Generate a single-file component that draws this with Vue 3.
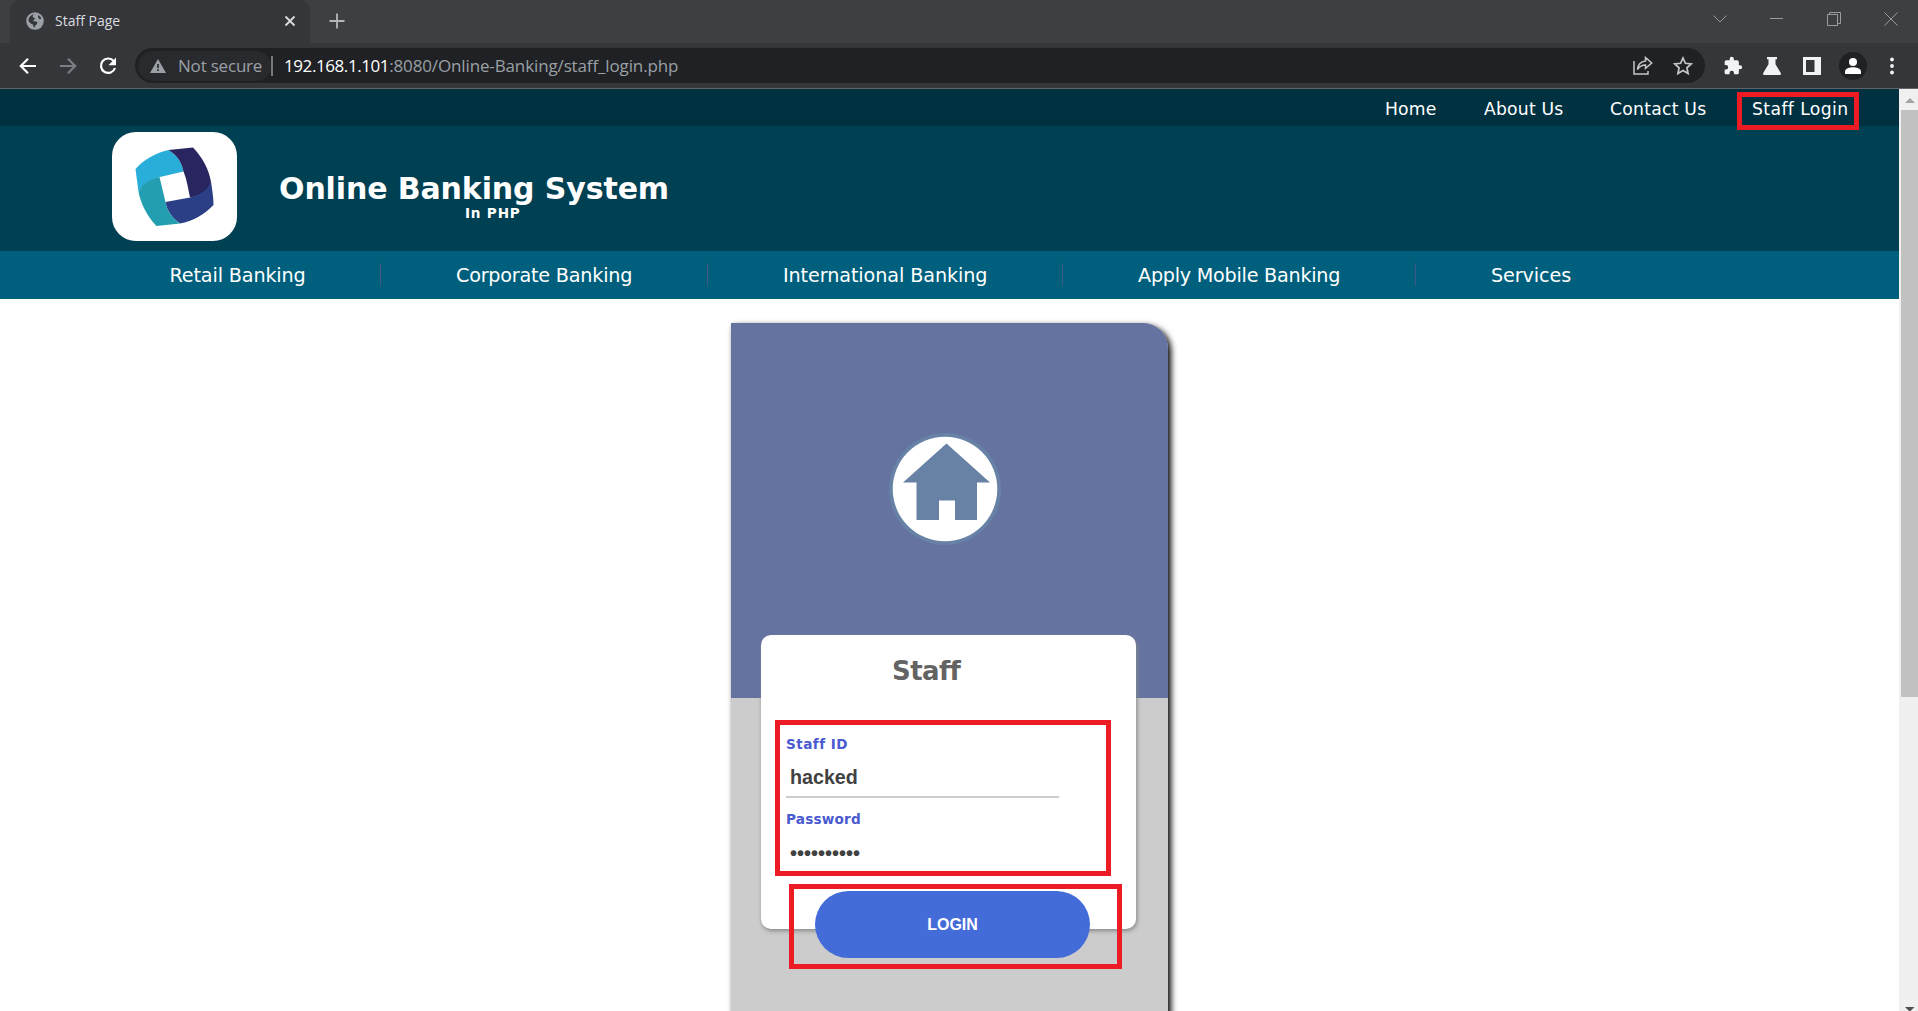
<script setup>
const topLinks = [
  { label: 'Home', cls: 'l1' },
  { label: 'About Us', cls: 'l2' },
  { label: 'Contact Us', cls: 'l3' },
  { label: 'Staff Login', cls: 'l4', marked: true },
]
const navLinks = ['Retail Banking', 'Corporate Banking', 'International Banking', 'Apply Mobile Banking', 'Services']
</script>

<template>
  <div class="window">
    <header class="tabstrip">
      <div class="tab">
        <svg class="favicon" width="18" height="18" viewBox="0 0 18 18">
          <circle cx="9" cy="9" r="8.8" fill="#9aa0a6" />
          <path d="M8.500 2.300C7 3 6.300 4 6.800 5c.5.900 2 .6 2.100 1.700 0 1-1.500.9-1.700 1.800 0 .9 1.500.8 2.600 1 1.400.3 1.700 1.100 1.400 2-.4 1-1.500 1.300-1.900 2.200-.3.600-.3 1.300-1 1.900-1-.5-.6-1.900-1.200-2.700-.8-.9-2.200-.9-3-1.900-.8-1-1.500-1.500-1.600-2.700C2.700 5.200 5.200 2.500 8.500 2.300zM12 3c1.600.7 2.800 2 3.300 3.600-.9.800-2 .6-2.600-.2-.6-1-.8-2.200-.7-3.400z" fill="#35363a" />
        </svg>
        <span class="tab-title">Staff Page</span>
        <svg class="tab-close" width="12" height="12" viewBox="0 0 12 12"><path d="M1.500 1.500l9 9m0-9l-9 9" stroke="#dadce0" stroke-width="1.800" /></svg>
      </div>
      <svg class="newtab" width="16" height="16" viewBox="0 0 16 16"><path d="M8 .5v15M.5 8h15" stroke="#b4b7ba" stroke-width="1.800" /></svg>
      <div class="controls">
        <svg width="14" height="14" viewBox="0 0 14 14"><path d="M.5 3.500L7 10l6.500-6.500" /></svg>
        <svg width="14" height="14" viewBox="0 0 14 14"><path d="M0 6.500h13" /></svg>
        <svg width="14" height="14" viewBox="0 0 14 14"><path d="M.5 2.500h10v11h-10zM2.500 2.500v-2h11v11h-3" /></svg>
        <svg width="14" height="14" viewBox="0 0 14 14"><path d="M.5.500l13 13m0-13l-13 13" /></svg>
      </div>
    </header>

    <div class="toolbar">
      <div class="history">
        <svg width="20" height="20" viewBox="0 0 20 20"><path d="M18 10H3M10 2.800L2.800 10l7.200 7.200" stroke="#fff" /></svg>
        <svg width="20" height="20" viewBox="0 0 20 20"><path d="M2 10h15M10 2.800l7.200 7.200-7.200 7.200" stroke="#7b7e82" /></svg>
        <svg width="20" height="20" viewBox="0 0 20 20"><path d="M15.800 5.200A7.200 7.200 0 1 0 17 12" stroke="#fff" /><path d="M18 1.500v7.700h-7.500z" fill="#fff" /></svg>
      </div>
      <div class="omnibox">
        <div class="chip">
          <svg width="16" height="14" viewBox="0 0 16 14"><path d="M8 0l8 14H0z" fill="#9aa0a6" /><path d="M8 5v4M8 10.300v1.800" stroke="#292a2d" stroke-width="1.700" /></svg>
          <span class="insecure">Not secure</span>
        </div>
        <i class="bar"></i>
        <span class="host">192.168.1.101</span><span class="path">:8080/Online-Banking/staff_login.php</span>
        <svg class="share" width="20" height="19" viewBox="0 0 20 19"><path d="M1 5v13h14v-3M4.500 13.500C5 8.500 8 5.500 12.500 5V1.500L18.700 7l-6.200 5.300V9C9 9 6.500 10.500 4.500 13.500z" /></svg>
        <svg class="star" width="20" height="20" viewBox="0 0 20 20"><path d="M10 2l2.400 5.300 5.800.6-4.300 3.900 1.200 5.700-5.100-2.900-5.100 2.900 1.200-5.700-4.300-3.900 5.800-.6z" /></svg>
      </div>
      <svg class="a1" width="20" height="20" viewBox="0 0 24 24"><path fill="#f1f3f4" d="M20.500 11H19V7c0-1.100-.9-2-2-2h-4V3.500a2.500 2.500 0 0 0-5 0V5H4c-1.100 0-2 .9-2 2v3.800h1.500a2.700 2.700 0 0 1 0 5.400H2V20c0 1.100.9 2 2 2h3.800v-1.500a2.700 2.700 0 0 1 5.400 0V22H17c1.100 0 2-.9 2-2v-4h1.500a2.500 2.500 0 0 0 0-5z" /></svg>
      <svg class="a2" width="18" height="18" viewBox="0 0 18 18"><path fill="#f1f3f4" d="M4 0h10v2.300h-1.500v5L17.800 16c.4 1-.2 2-1.200 2H1.400C.4 18-.2 17 .2 16L5.500 7.300v-5H4z" /></svg>
      <svg class="a3" width="18" height="18" viewBox="0 0 18 18"><path fill="#f1f3f4" fill-rule="evenodd" d="M0 0h18v18H0zM3 3v12h8.500V3z" /></svg>
      <svg class="a4" width="28" height="28" viewBox="0 0 28 28"><circle cx="14" cy="14" r="14" fill="#202124" /><circle cx="14" cy="10" r="4" fill="#fff" /><path d="M6 22v-2.500c0-3 5-4.300 8-4.300s8 1.300 8 4.300V22z" fill="#fff" /></svg>
      <svg class="a5" width="4" height="18" viewBox="0 0 4 18"><g fill="#f1f3f4"><circle cx="2" cy="2.500" r="1.900" /><circle cx="2" cy="9" r="1.900" /><circle cx="2" cy="15.500" r="1.900" /></g></svg>
    </div>

    <div class="viewport">
      <main class="page">
        <nav class="topbar">
          <a v-for="l in topLinks" :key="l.label" :class="l.cls">{{ l.label }}<i v-if="l.marked" class="mark mark-link"></i></a>
        </nav>
        <section class="banner">
          <div class="logo">
            <svg width="125" height="109" viewBox="0 0 125 109">
              <path d="M23.500 37C32 27 44 21 56.500 18 65 23 69.500 30 71.500 39.500L48 45C36 48 29 54 26.500 60z" fill="#29aeda" />
              <path d="M56.500 18l24.500-2.500C91 26 97 38 99 50 97 59 88 64 78 65.500 76 56 75 48 71.500 39.500 69.500 30 65 23 56.500 18z" fill="#292561" />
              <path d="M99 49.500C100 57 101.500 65 101.500 73 92 83 81 89 68 91.500 60 86 55 79 53.500 70L78 65.500C88 63 96 58 99 49.500z" fill="#2a3f86" />
              <path d="M26.500 60C29 53 37 47 47.500 45L53.500 70C55 79 60 86 68 91.500L44.500 94C35 84 29 72 26.500 60z" fill="#229eb0" />
            </svg>
          </div>
          <div class="brand">
            <h1>Online Banking System</h1>
            <h5>In PHP</h5>
          </div>
        </section>
        <nav class="mainnav">
          <a v-for="(n, i) in navLinks" :key="n" :class="'n' + i">{{ n }}</a>
        </nav>

        <section class="login">
          <div class="hero">
            <svg width="114" height="114" viewBox="0 0 114 114">
              <circle cx="57" cy="57" r="56" fill="#6882a6" />
              <circle cx="57" cy="57" r="52.300" fill="#fff" />
              <path d="M58.500 11.500L102 50.500H89V88H67V68.500H51V88H28.500V50.500H15z" fill="#6882a6" />
            </svg>
          </div>
          <form class="panel" @submit.prevent>
            <h2>Staff</h2>
            <label class="lab1">Staff ID</label>
            <div class="field">hacked</div>
            <label class="lab2">Password</label>
            <div class="field pw">••••••••••</div>
            <button type="button">LOGIN</button>
            <i class="mark mark-fields"></i>
            <i class="mark mark-button"></i>
          </form>
        </section>
      </main>
      <aside class="scroll">
        <svg width="19" height="21" viewBox="0 0 19 21"><path d="M6 14l5-5 5 5z" fill="#a3a3a3" /></svg>
        <div class="thumb"></div>
        <svg class="down" width="19" height="4" viewBox="0 0 19 4"><path d="M6 0h9.500l-4 4h-1.500z" fill="#505050" /></svg>
      </aside>
    </div>
  </div>
</template>

<style>
body { margin: 0; overflow: hidden; }
</style>

<style scoped>
* { box-sizing: border-box; }
svg { display: block; flex: none; fill: none; }
h1, h2, h5 { margin: 0; }
.window { width: 1918px; height: 1011px; display: flex; flex-direction: column; overflow: hidden; background: #fff; font-family: Verdana, "DejaVu Sans", sans-serif; }

.tabstrip { height: 43px; flex: none; display: flex; align-items: flex-start; background: #3c4043; font-family: "Segoe UI", "Open Sans", sans-serif; }
.tab { width: 300px; height: 43px; margin-left: 10px; padding-bottom: 2px; display: flex; align-items: center; background: #35363a; border-radius: 10px 10px 0 0; color: #dadce0; font-size: 14px; }
.favicon { margin-left: 16px; }
.tab-title { margin-left: 11px; flex: 1; line-height: 40px; white-space: nowrap; }
.tab-close { margin-right: 14px; }
.newtab { margin: 13px 0 0 19px; }
.controls { margin: 12px 20px 0 auto; display: flex; gap: 43px; }
.controls path { stroke: #999b9d; stroke-width: 1; }

.toolbar { height: 46px; flex: none; display: flex; align-items: center; background: #35363a; border-bottom: 1px solid #606367; font-family: "Segoe UI", "Open Sans", sans-serif; }
.history { display: flex; gap: 20px; margin-left: 17.5px; }
.history path[stroke] { stroke-width: 2.2; }
.omnibox { width: 1570px; height: 35px; margin-left: 17.5px; padding-left: 3px; display: flex; align-items: center; background: #202124; border-radius: 18px; font-size: 17px; line-height: 33px; white-space: nowrap; }
.chip { width: 133px; height: 30px; padding-left: 12px; display: flex; align-items: center; background: #292a2d; border-radius: 15px; color: #9aa0a6; line-height: 30px; }
.insecure { margin-left: 12px; letter-spacing: -0.2px; }
.bar { width: 2px; height: 20px; background: #77797d; margin-right: 11px; }
.host { color: #fff; letter-spacing: -0.42px; }
.path { color: #9aa0a6; flex: 1; letter-spacing: -0.13px; }
.share path { stroke: #c4c7ca; stroke-width: 1.5; }
.star { margin: 0 12px 0 20px; }
.star path { stroke: #c4c7ca; stroke-width: 1.7; }
.a1 { margin-left: 18px; }
.a2 { margin-left: 20px; }
.a3 { margin-left: 22px; }
.a4 { margin-left: 18px; }
.a5 { margin-left: 23px; }

.viewport { flex: 1; min-height: 0; display: flex; }
.page { width: 1899px; overflow: hidden; color: #fff; white-space: nowrap; }
.topbar { height: 37px; display: flex; background: #003141; padding-left: 1385px; font-size: 17.2px; line-height: 41px; }
.topbar a { position: relative; }
.l1 { width: 99px; letter-spacing: 0.2px; }
.l2 { width: 126px; letter-spacing: 0.2px; }
.l3 { width: 142px; letter-spacing: 0.25px; }
.l4 { letter-spacing: 0.4px; }
.mark { position: absolute; border: 5px solid #ed1c24; pointer-events: none; }
.mark-link { left: -15px; top: 3px; width: 122px; height: 38px; z-index: 2; }
.banner { height: 125px; display: flex; background: #004053; }
.logo { width: 125px; height: 109px; margin: 6px 0 0 112px; background: #fff; border-radius: 24px; }
.brand { margin: 45px 0 0 42px; }
h1 { font-size: 30px; line-height: 36px; letter-spacing: -0.12px; }
h5 { font-size: 13.6px; line-height: 16px; margin: -2px 0 0 186px; letter-spacing: 0.8px; }
.mainnav { height: 48px; display: flex; background: #005f7d; font-size: 19.2px; line-height: 49px; padding-left: 93px; }
.mainnav a { padding-left: 75px; position: relative; }
.mainnav a.n0 { padding-left: 76.5px; }
.mainnav a:not(:last-child)::after { content: ""; position: absolute; right: 0; top: 12px; width: 1px; height: 23px; background: #3c5a85; }
.n0 { width: 288px; letter-spacing: -0.15px; }
.n1 { width: 327px; letter-spacing: -0.22px; }
.n2 { width: 355px; letter-spacing: -0.1px; }
.n3 { width: 353px; letter-spacing: -0.25px; }
.n4 { letter-spacing: -0.1px; }

.login { width: 437px; height: 800px; margin: 24px 0 0 731px; border-radius: 0 25px 0 0; background: #ccc; box-shadow: 3px 3px 6px 0 #000; }
.hero { height: 375px; padding: 109px 0 0 157px; background: #6473a0; border-radius: 0 25px 0 0; }
.panel { position: relative; width: 375px; height: 294px; margin: -63px 0 0 30px; padding: 20px 0 0 25px; background: #fff; border-radius: 10px; box-shadow: 1px 2px 4px #888; }
h2 { font-size: 26px; line-height: 32px; color: #636363; margin-left: 106px; letter-spacing: -0.6px; }
label { display: block; font-size: 13.6px; line-height: 16px; font-weight: bold; color: #4a5ad0; }
.lab1 { margin-top: 49px; letter-spacing: 0.45px; }
.field { width: 273px; height: 33px; margin-top: 13px; padding-left: 4px; border-bottom: 2px solid #ccc; font: bold 19.7px/24px "Liberation Sans", Arial, sans-serif; color: #414141; }
.lab2 { margin-top: 13px; letter-spacing: 0.2px; }
.pw { border: 0; font-size: 20px; margin-top: 14px; }
button { display: block; width: 275px; height: 67px; margin: 17px 0 0 29px; border: 0; border-radius: 34px; background: #446cd9; color: #fff; font: bold 16px/67px "Liberation Sans", Arial, sans-serif; padding: 0; }
.mark-fields { left: 14px; top: 85px; width: 336px; height: 156px; }
.mark-button { left: 28px; top: 249px; width: 333px; height: 85px; }

.scroll { width: 19px; background: #f0f0f0; display: flex; flex-direction: column; }
.thumb { height: 587px; margin-left: 2px; background: #c1c1c1; }
.down { margin-top: auto; }
</style>
